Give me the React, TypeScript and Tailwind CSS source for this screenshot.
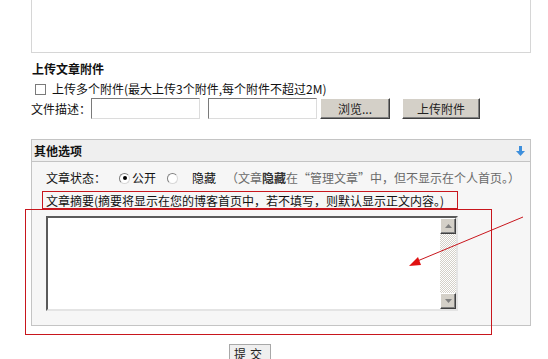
import React from "react";

const font = "font-['SimSun','Noto_Sans_CJK_SC','Noto_Sans',sans-serif]";

function ClassicButton({ label, width }: { label: string; width: string }) {
  return (
    <button
      type="button"
      className={`${width} flex h-[21px] shrink-0 items-center justify-center border border-t-white border-l-white border-r-[#404040] border-b-[#404040] bg-[#d4d0c8] text-[12px] leading-none text-[#222] shadow-[inset_-1px_-1px_0_#808080]`}
    >
      {label}
    </button>
  );
}

function ClassicInput({ width }: { width: string }) {
  return (
    <div
      className={`${width} h-[21px] shrink-0 border border-t-[#7a7a7a] border-l-[#7a7a7a] border-r-[#dcdcdc] border-b-[#dcdcdc] bg-white`}
    />
  );
}

function Radio({ checked }: { checked?: boolean }) {
  return (
    <span className="flex h-[11px] w-[11px] shrink-0 items-center justify-center rounded-full border border-t-[#808080] border-l-[#808080] border-r-[#d8d8d8] border-b-[#d8d8d8] bg-white">
      {checked ? <span className="h-[4px] w-[4px] rounded-full bg-black" /> : null}
    </span>
  );
}

function ScrollArrow({ up }: { up?: boolean }) {
  return (
    <div className="flex h-[16px] w-[16px] items-center justify-center border border-t-white border-l-white border-r-[#404040] border-b-[#404040] bg-[#d4d0c8] shadow-[inset_-1px_-1px_0_#808080]">
      <svg width="7" height="4" viewBox="0 0 7 4">
        {up ? (
          <polygon points="3.5,0 7,4 0,4" fill="#808080" />
        ) : (
          <polygon points="0,0 7,0 3.5,4" fill="#808080" />
        )}
      </svg>
    </div>
  );
}

export default function App() {
  return (
    <div className={`relative h-[359px] w-[548px] overflow-hidden bg-white text-[12px] text-[#111] ${font}`}>
      {/* tail of the article body box */}
      <div className="ml-[31px] h-[53px] w-[500px] border border-t-0 border-[#d6d6d6]" />

      <div className="ml-[32px] mt-[9px] h-[14px] text-[12px] font-bold leading-[14px]">上传文章附件</div>

      <div className="ml-[35px] mt-[5px] flex h-[16px] items-center gap-[6px] whitespace-nowrap leading-[16px]">
        <span className="h-[11px] w-[11px] border border-[#7a7a7a] bg-white" />
        <span>上传多个附件(最大上传3个附件,每个附件不超过2M)</span>
      </div>

      <div className="ml-[31px] mt-[1px] flex h-[21px] items-center whitespace-nowrap">
        <span className="w-[60px] shrink-0 leading-[16px]">文件描述：</span>
        <ClassicInput width="w-[109px]" />
        <div className="w-[8px] shrink-0" />
        <ClassicInput width="w-[109px]" />
        <div className="w-[3px] shrink-0" />
        <ClassicButton label="浏览..." width="w-[70px]" />
        <div className="w-[12px] shrink-0" />
        <ClassicButton label="上传附件" width="w-[78px]" />
      </div>

      {/* 其他选项 panel */}
      <div className="ml-[31px] mt-[20px] w-[500px] border border-[#c4c4c4] bg-[#f6f6f6]">
        <div className="flex h-[22px] items-center justify-between border-b border-[#c4c4c4] bg-[#efefef] pl-[2px] pr-[5px]">
          <span className="font-bold leading-[14px]">其他选项</span>
          <svg width="9" height="10" viewBox="0 0 9 10">
            <rect x="3" y="0" width="3" height="6" fill="#3d8fdc" />
            <polygon points="0,5 9,5 4.5,10" fill="#3d8fdc" />
          </svg>
        </div>

        <div className="px-[14px] pb-[14px] pt-[8px]">
          <div className="flex h-[16px] items-center whitespace-nowrap leading-[16px]">
            <span className="w-[73px] shrink-0">文章状态：</span>
            <Radio checked />
            <span className="ml-[2px] w-[35px] shrink-0">公开</span>
            <Radio />
            <span className="ml-[14px] shrink-0">隐藏</span>
            <span className="ml-[10px] shrink-0 text-[#6a6a6a]">
              （文章<b className="text-[#333]">隐藏</b>在“管理文章”中，但不显示在个人首页。）
            </span>
          </div>

          <div className="mt-[7px] h-[16px] whitespace-nowrap leading-[16px]">
            文章摘要(摘要将显示在您的博客首页中，若不填写，则默认显示正文内容。)
          </div>

          <div className="mt-[7px] flex h-[95px] w-[412px] border-2 border-t-[#5a5a5a] border-l-[#5a5a5a] border-r-[#e4e4e4] border-b-[#e4e4e4] bg-white">
            <div className="flex-1" />
            <div className="flex w-[16px] flex-col">
              <ScrollArrow up />
              <div className="flex-1 bg-[repeating-conic-gradient(#d4d0c8_0_25%,#ffffff_0_50%)] bg-[length:2px_2px]" />
              <ScrollArrow />
            </div>
          </div>
        </div>
      </div>

      <div className="ml-[229px] mt-[18px]">
        <button
          type="button"
          className="flex h-[20px] w-[42px] items-center justify-center border border-[#a8a8a8] bg-[#efefef] text-[12px] leading-none tracking-[4px] text-[#222]"
        >
          提交
        </button>
      </div>

      {/* red annotations */}
      <div className="pointer-events-none absolute left-[42px] top-[191px] h-[18px] w-[416px] border border-[#c8161d]" />
      <div className="pointer-events-none absolute left-[25px] top-[209px] h-[126px] w-[467px] border border-[#c8161d]" />
      <svg className="pointer-events-none absolute left-0 top-0" width="548" height="359">
        <line x1="523" y1="217" x2="415" y2="262" stroke="#c8161d" strokeWidth="1" />
        <polygon points="409,266 418,257 421,265" fill="#e01010" />
      </svg>
    </div>
  );
}
